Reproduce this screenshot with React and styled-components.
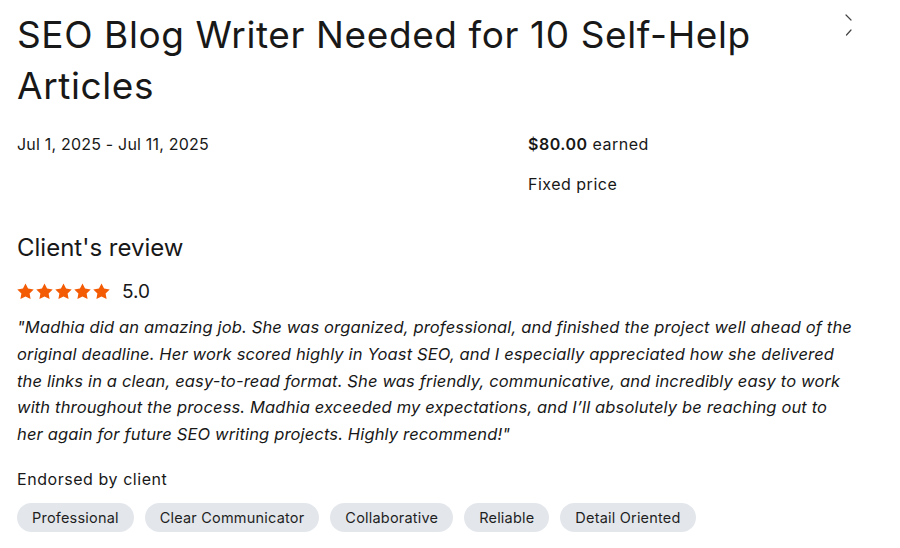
import React from 'react';
import styled, { createGlobalStyle } from 'styled-components';

const GlobalStyle = createGlobalStyle`
  html, body {
    margin: 0;
    padding: 0;
    background: #ffffff;
  }
  body {
    font-family: Inter, "Liberation Sans", Arial, sans-serif;
    color: #181818;
  }
`;

const Page = styled.div`
  position: relative;
  width: 900px;
  height: 548px;
  overflow: hidden;
  padding: 0 0 0 17px;
  box-sizing: border-box;
`;

const CloseButton = styled.div`
  position: absolute;
  top: 12px;
  right: 47px;
  width: 8px;
  height: 26px;
`;

const Title = styled.h1`
  margin: 0;
  padding-top: 9px;
  width: 800px;
  font-size: 37px;
  font-weight: 400;
  line-height: 51px;
  letter-spacing: 0.6px;
`;

const MetaRow = styled.div`
  display: grid;
  grid-template-columns: 511px 1fr;
  margin-top: 23px;
  font-size: 16px;
  line-height: 20px;
`;

const MetaColumn = styled.div`
  display: flex;
  flex-direction: column;
  gap: 20px;
  letter-spacing: ${p => (p.$wide ? '0.5px' : '0.2px')};
`;

const Amount = styled.span`
  font-weight: 600;
`;

const SectionTitle = styled.h2`
  margin: 39px 0 0;
  font-size: 24px;
  font-weight: 400;
  line-height: 30px;
`;

const RatingRow = styled.div`
  display: flex;
  align-items: center;
  margin-top: 16px;
  height: 24px;
`;

const Stars = styled.div`
  display: flex;
  gap: 2px;
  margin-right: 12px;
`;

const Score = styled.span`
  font-size: 19px;
`;

const Quote = styled.p`
  margin: 11px 0 0;
  width: 838px;
  font-size: 16.5px;
  font-style: italic;
  line-height: 26.8px;
  letter-spacing: 0.15px;
`;

const Endorsed = styled.div`
  margin-top: 21px;
  font-size: 16px;
  line-height: 20px;
  letter-spacing: 0.55px;
`;

const Chips = styled.div`
  display: flex;
  gap: 11px;
  margin-top: 14px;
`;

const Chip = styled.span`
  display: inline-flex;
  align-items: center;
  height: 29px;
  padding: 0 15px;
  border-radius: 15px;
  background: #e3e7ec;
  font-size: 14.5px;
  letter-spacing: 0.2px;
  color: #1f1f1f;
`;

const Star = () => (
    <svg width="17" height="17" viewBox="0 0 24 24">
        <path fill="#f35b05" d="M12 .6l3.6 7.3 8 1.2-5.8 5.6 1.4 8L12 18.9l-7.2 3.8 1.4-8L.4 9.1l8-1.2z" />
    </svg>
);

const tags = ['Professional', 'Clear Communicator', 'Collaborative', 'Reliable', 'Detail Oriented'];

const App = () => (
    <Page>
        <GlobalStyle />
        <CloseButton>
            <svg width="8" height="26" viewBox="0 0 8 26">
                <path d="M1 3l5 5M1.5 23l4.5-5" stroke="#444" strokeWidth="1.2" strokeLinecap="round" fill="none" />
            </svg>
        </CloseButton>
        <Title>SEO Blog Writer Needed for 10 Self-Help Articles</Title>
        <MetaRow>
            <MetaColumn>
                <span>Jul 1, 2025 - Jul 11, 2025</span>
            </MetaColumn>
            <MetaColumn $wide>
                <span><Amount>$80.00</Amount> earned</span>
                <span>Fixed price</span>
            </MetaColumn>
        </MetaRow>
        <SectionTitle>Client's review</SectionTitle>
        <RatingRow>
            <Stars>
                {[0, 1, 2, 3, 4].map(i => <Star key={i} />)}
            </Stars>
            <Score>5.0</Score>
        </RatingRow>
        <Quote>
            "Madhia did an amazing job. She was organized, professional, and finished the project well ahead of the
            original deadline. Her work scored highly in Yoast SEO, and I especially appreciated how she delivered
            the links in a clean, easy-to-read format. She was friendly, communicative, and incredibly easy to work
            with throughout the process. Madhia exceeded my expectations, and I’ll absolutely be reaching out to
            her again for future SEO writing projects. Highly recommend!"
        </Quote>
        <Endorsed>Endorsed by client</Endorsed>
        <Chips>
            {tags.map(tag => <Chip key={tag}>{tag}</Chip>)}
        </Chips>
    </Page>
);

export default App;
